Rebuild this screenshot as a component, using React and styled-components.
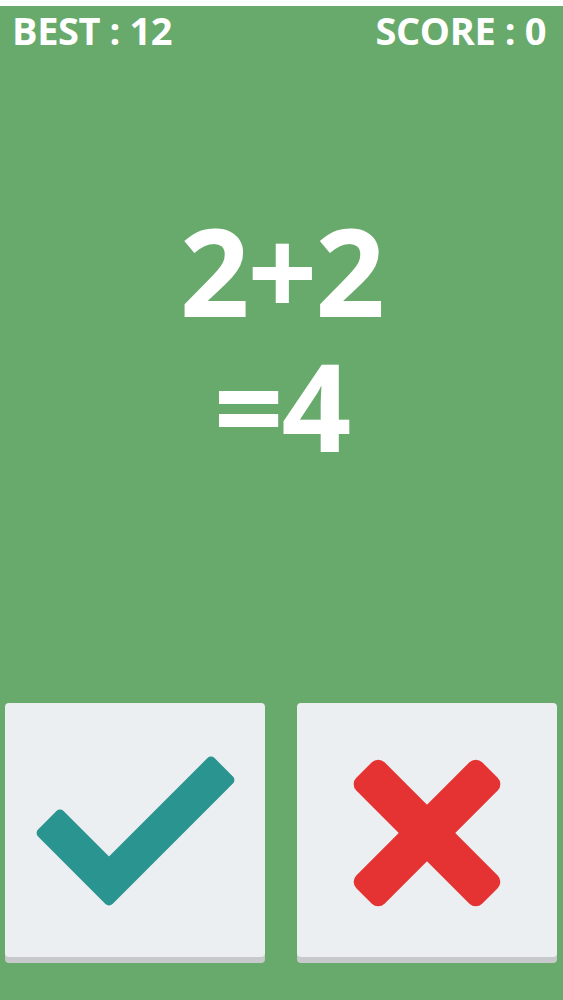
import React from "react";
import styled, { createGlobalStyle } from "styled-components";

const GlobalStyle = createGlobalStyle`
  html, body {
    margin: 0;
    padding: 0;
    background: #ffffff;
  }
  body {
    font-family: "Open Sans", "Liberation Sans", sans-serif;
  }
`;

const Page = styled.div`
  padding-top: 6px;
  background: #ffffff;
`;

const Screen = styled.main`
  height: 994px;
  background: #68aa6b;
  display: flex;
  flex-direction: column;
  color: #ffffff;
`;

const Header = styled.header`
  display: flex;
  justify-content: space-between;
  align-items: center;
  padding: 4px 17px 0 12px;
`;

const Stat = styled.span`
  font-size: 38px;
  font-weight: 700;
  line-height: 40px;
  letter-spacing: -0.4px;
`;

const Equation = styled.section`
  flex: 1;
  display: flex;
  flex-direction: column;
  align-items: center;
  padding-top: 153px;
`;

const EquationText = styled.p`
  margin: 0;
  text-align: center;
  font-size: 122px;
  font-weight: 700;
  line-height: 135px;
  letter-spacing: -2px;
`;

const Answers = styled.div`
  display: grid;
  grid-template-columns: 260px 260px;
  column-gap: 32px;
  padding: 0 6px 43px 5px;
`;

const AnswerButton = styled.button`
  width: 260px;
  height: 254px;
  padding: 0;
  border: none;
  border-radius: 4px;
  background: #eceff1;
  box-shadow: 0 6px 0 #c7c9cb;
  cursor: pointer;
  display: flex;

  svg {
    display: block;
  }
`;

const CheckIcon = ({ color }) => (
  <svg width="260" height="254" viewBox="0 0 260 254">
    <polygon
      points="55,111.6 104,160.6 206,58.6 224.4,77 104,197.4 36.6,130"
      fill={color}
      stroke={color}
      strokeWidth="10"
      strokeLinejoin="round"
    />
  </svg>
);

const CrossIcon = ({ color }) => (
  <svg width="260" height="254" viewBox="0 0 260 254">
    <g fill={color}>
      <rect x="41" y="110" width="178" height="40" rx="9" transform="rotate(45 130 130)" />
      <rect x="41" y="110" width="178" height="40" rx="9" transform="rotate(-45 130 130)" />
    </g>
  </svg>
);

export default function App() {
  return (
    <Page>
      <GlobalStyle />
      <Screen>
        <Header>
          <Stat>BEST : 12</Stat>
          <Stat>SCORE : 0</Stat>
        </Header>
        <Equation>
          <EquationText>
            2+2
            <br />
            =4
          </EquationText>
        </Equation>
        <Answers>
          <AnswerButton aria-label="Correct">
            <CheckIcon color="#2a9490" />
          </AnswerButton>
          <AnswerButton aria-label="Wrong">
            <CrossIcon color="#e53333" />
          </AnswerButton>
        </Answers>
      </Screen>
    </Page>
  );
}
